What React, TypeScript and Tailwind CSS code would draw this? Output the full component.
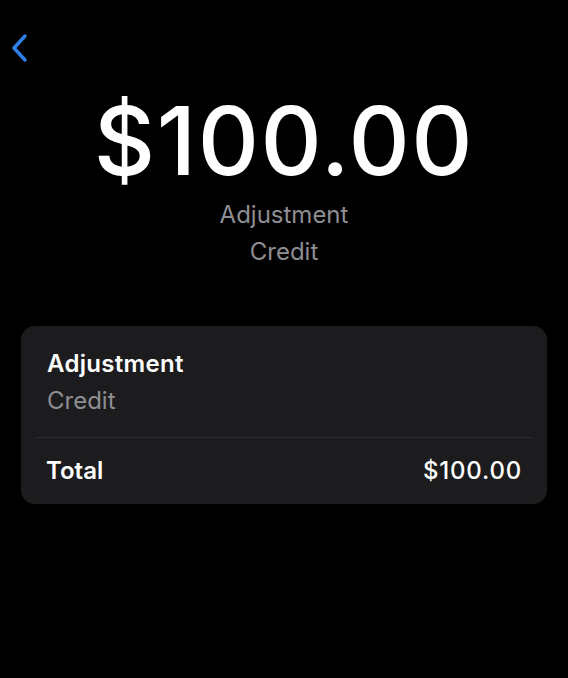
import React from 'react';

const font = { fontFamily: 'Inter, "Noto Sans", sans-serif' };

function BackChevron(): React.JSX.Element {
  return (
    <svg width="20" height="30" viewBox="0 0 20 30" fill="none">
      <path d="M15 3 L4 15 L15 27" stroke="#2f80ed" strokeWidth={3.4} strokeLinecap="round" strokeLinejoin="round" />
    </svg>
  );
}

export default function App(): React.JSX.Element {
  return (
    <div className="w-[568px] h-[678px] bg-black text-white overflow-hidden" style={font}>
      {/* Nav */}
      <div className="h-[64px] pl-[10px] pt-[33px]">
        <BackChevron />
      </div>

      {/* Amount header */}
      <div className="flex flex-col items-center">
        <div className="text-[95px] leading-[100px] font-medium tracking-[1.5px] mt-[27px]">$100.00</div>
        <div className="text-[24px] leading-[37px] text-[#8e8e93] mt-[5px]">Adjustment</div>
        <div className="text-[24px] leading-[37px] text-[#8e8e93]">Credit</div>
      </div>

      {/* Details card */}
      <div className="mx-[21px] mt-[56px] rounded-[14px] bg-[#1c1c1e]">
        <div className="px-[26px] pt-[19px] pb-[18px]">
          <div className="text-[24px] leading-[37px] font-semibold tracking-[0.3px]">Adjustment</div>
          <div className="text-[24px] leading-[37px] text-[#8e8e93]">Credit</div>
        </div>
        <div className="mx-[14px] h-px bg-[#2c2c2e]" />
        <div className="flex items-center justify-between px-[25px] h-[66px]">
          <span className="text-[24px] font-semibold">Total</span>
          <span className="text-[24px] font-medium tracking-[0.8px]">$100.00</span>
        </div>
      </div>
    </div>
  );
}
